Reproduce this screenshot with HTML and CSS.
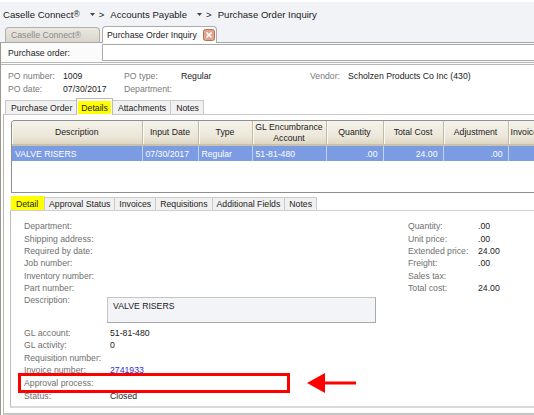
FILE: index.html
```html
<!DOCTYPE html>
<html>
<head>
<meta charset="utf-8">
<link rel="stylesheet" href="styles.css">
</head>
<body>
<div class="app">
  <div class="topbar">
    <div class="crumbs">
      <span class="crumb">Caselle Connect<span class="reg">®</span></span>
      <span class="sep"><svg class="tri" width="5" height="3" viewBox="0 0 5 3"><polygon points="0,0 5,0 2.5,3" fill="#444"/></svg><span>&gt;</span></span>
      <span class="crumb">Accounts Payable</span>
      <span class="sep"><svg class="tri" width="5" height="3" viewBox="0 0 5 3"><polygon points="0,0 5,0 2.5,3" fill="#444"/></svg><span>&gt;</span></span>
      <span class="crumb">Purchase Order Inquiry</span>
    </div>
    <div class="doctabs">
      <div class="doctab inactive">Caselle Connect®</div>
      <div class="doctab active">
        <span>Purchase Order Inquiry</span>
        <svg class="close" width="12" height="12" viewBox="0 0 12 12">
          <rect x="0.5" y="0.5" width="11" height="11" rx="2" fill="#e1a58f" stroke="#b8705a"/>
          <path d="M3.5 3.5 L8.5 8.5 M8.5 3.5 L3.5 8.5" stroke="#fff" stroke-width="1.6"/>
        </svg>
      </div>
    </div>
  </div>

  <div class="main">
    <div class="search-row">
      <span class="search-label">Purchase order:</span>
      <div class="search-input"></div>
    </div>

    <div class="po-info">
      <span class="k">PO number:</span><span class="v">1009</span>
      <span class="k">PO type:</span><span class="v">Regular</span>
      <span class="k">Vendor:</span><span class="v">Scholzen Products Co Inc (430)</span>
      <span class="k">PO date:</span><span class="v">07/30/2017</span>
      <span class="k">Department:</span><span class="v"></span>
    </div>

    <div class="subtabs">
      <div class="stab">Purchase Order</div>
      <div class="stab sel"><span class="hl">Details</span></div>
      <div class="stab">Attachments</div>
      <div class="stab">Notes</div>
    </div>

    <div class="panel">
      <div class="grid">
        <table>
          <colgroup>
            <col class="c-desc"><col class="c-date"><col class="c-type"><col class="c-gl"><col class="c-qty"><col class="c-total"><col class="c-adj"><col class="c-inv">
          </colgroup>
          <thead>
            <tr>
              <th>Description</th>
              <th>Input Date</th>
              <th>Type</th>
              <th class="two">GL Encumbrance<br>Account</th>
              <th>Quantity</th>
              <th>Total Cost</th>
              <th>Adjustment</th>
              <th class="left">Invoice</th>
            </tr>
          </thead>
          <tbody>
            <tr>
              <td>VALVE RISERS</td>
              <td>07/30/2017</td>
              <td>Regular</td>
              <td>51-81-480</td>
              <td class="num">.00</td>
              <td class="num">24.00</td>
              <td class="num">.00</td>
              <td></td>
            </tr>
          </tbody>
        </table>
      </div>

      <div class="detail">
        <div class="dtabs">
          <div class="dtab sel">Detail</div>
          <div class="dtab">Approval Status</div>
          <div class="dtab">Invoices</div>
          <div class="dtab">Requisitions</div>
          <div class="dtab">Additional Fields</div>
          <div class="dtab">Notes</div>
        </div>
        <div class="detail-body">
          <div class="detail-left">
            <div class="row"><span class="k">Department:</span><span class="v"></span></div>
            <div class="row"><span class="k">Shipping address:</span><span class="v"></span></div>
            <div class="row"><span class="k">Required by date:</span><span class="v"></span></div>
            <div class="row"><span class="k">Job number:</span><span class="v"></span></div>
            <div class="row"><span class="k">Inventory number:</span><span class="v"></span></div>
            <div class="row"><span class="k">Part number:</span><span class="v"></span></div>
            <div class="row desc"><span class="k">Description:</span><div class="desc-box">VALVE RISERS</div></div>
            <div class="row lo"><span class="k">GL account:</span><span class="v">51-81-480</span></div>
            <div class="row lo"><span class="k">GL activity:</span><span class="v">0</span></div>
            <div class="row lo"><span class="k">Requisition number:</span><span class="v"></span></div>
            <div class="row lo"><span class="k">Invoice number:</span><a class="link">2741933</a></div>
            <div class="row lo"><span class="k">Approval process:</span><span class="v"></span></div>
            <div class="row lo"><span class="k">Status:</span><span class="v">Closed</span></div>
          </div>
          <div class="detail-right">
            <div class="row"><span class="k">Quantity:</span><span class="v">.00</span></div>
            <div class="row"><span class="k">Unit price:</span><span class="v">.00</span></div>
            <div class="row"><span class="k">Extended price:</span><span class="v">24.00</span></div>
            <div class="row"><span class="k">Freight:</span><span class="v">.00</span></div>
            <div class="row"><span class="k">Sales tax:</span><span class="v"></span></div>
            <div class="row"><span class="k">Total cost:</span><span class="v">24.00</span></div>
          </div>
          <div class="callout-box"></div>
          <svg class="callout-arrow" width="52" height="22" viewBox="0 0 52 22">
            <polygon points="1,11 19,1 19,21" fill="#f00"/>
            <line x1="16" y1="11" x2="50" y2="11" stroke="#f00" stroke-width="3"/>
          </svg>
        </div>
      </div>
    </div>
  </div>
</div>
</body>
</html>
```

FILE: styles.css
```css
* { box-sizing: border-box; }
html, body { margin: 0; padding: 0; }
body {
  width: 534px;
  height: 415px;
  overflow: hidden;
  background: #fff;
  font-family: "Liberation Sans", Arial, sans-serif;
  font-size: 8.7px;
  color: #222;
}
.app { display: flex; flex-direction: column; height: 415px; }

/* top bar */
.topbar {
  height: 42px;
  flex: none;
  background: #f2f3f7;
  border-top: 2px solid #fff;
  display: flex;
  flex-direction: column;
}
.crumbs {
  height: 24px;
  display: flex;
  align-items: center;
  padding-left: 3px;
  font-size: 9.6px;
  color: #1b1b1b;
}
.reg { font-size: 8.5px; position: relative; top: -1px; }
.sep { display: flex; align-items: center; gap: 4px; margin: 0 6px 0 10px; }
.tri { display: block; }
.doctabs {
  flex: 1;
  display: flex;
  align-items: flex-end;
  padding-left: 5px;
}
.doctab {
  height: 15px;
  display: flex;
  align-items: center;
  border: 1px solid #aaa;
  border-bottom: none;
  border-radius: 4px 4px 0 0;
}
.doctab.inactive {
  width: 95px;
  padding-left: 5px;
  background: linear-gradient(#ebe8e1, #dad6cc);
  color: #8a8a8a;
  border-color: #b5b0a6;
}
.doctab.active {
  width: 115px;
  height: 17px;
  margin-left: 2px;
  margin-bottom: -1px;
  padding-left: 4px;
  background: #fff;
  color: #222;
  position: relative;
  z-index: 2;
}
.close { margin-left: auto; margin-right: 1px; display: block; }

/* main */
.main {
  flex: 1;
  display: flex;
  flex-direction: column;
  border-left: 1px solid #9d978e;
  border-top: 1px solid #a6a6a6;
  min-height: 0;
}
.search-row {
  height: 22px;
  flex: none;
  display: flex;
  align-items: center;
  padding-left: 7px;
  background: #fbfbfb;
  border-bottom: 3px double #b8b8b8;
}
.search-label { width: 94px; color: #222; }
.search-input {
  flex: 1;
  height: 17px;
  margin-right: -10px;
  background: #fff;
  border: 1px solid #a9a9a9;
}

.po-info {
  height: 32px;
  flex: none;
  padding: 4px 0 0 7px;
  display: grid;
  grid-template-columns: 55px 61px 57px 129px 38px auto;
  grid-auto-rows: 13px;
  align-items: center;
}
.po-info .k { color: #7a7a7a; }
.po-info .v { color: #222; white-space: nowrap; }

.subtabs {
  height: 17px;
  flex: none;
  display: flex;
  align-items: flex-end;
  padding-left: 4px;
}
.stab {
  height: 14px;
  padding: 0 4px 0 5px;
  display: flex;
  align-items: center;
  background: #f1f1f1;
  border: 1px solid #c9c9c9;
  border-bottom: none;
  margin-right: -1px;
}
.stab.sel {
  height: 17px;
  padding: 0 1px;
  background: #fff;
  margin-bottom: -1px;
  position: relative;
  z-index: 2;
  border-color: #b9b9b9;
}
.hl {
  background: #ffff00;
  height: 13px;
  padding: 0 3px;
  display: flex;
  align-items: center;
  margin-top: 1px;
}

/* panel */
.panel {
  flex: 1;
  min-height: 0;
  margin-left: 2px;
  border-left: 1px solid #b4b4b4;
  border-top: 1px solid #c8c8c8;
  border-bottom: 2px solid #c4c4c4;
  padding: 5px 0 5px 6px;
  display: flex;
  flex-direction: column;
}
.grid {
  flex: none;
  margin-left: 1px;
  width: 560px;
  height: 73px;
  border: 1px solid #8f8f8f;
  border-right: none;
  border-radius: 4px 0 0 0;
  overflow: hidden;
  background: #fff;
}
.grid table {
  border-collapse: collapse;
  table-layout: fixed;
  width: 576px;
}
.c-desc { width: 130px; }
.c-date { width: 56px; }
.c-type { width: 54px; }
.c-gl { width: 74px; }
.c-qty { width: 57px; }
.c-total { width: 60px; }
.c-adj { width: 65px; }
.c-inv { width: 80px; }
.grid th {
  height: 24px;
  padding: 0;
  font-weight: normal;
  color: #222;
  text-align: center;
  line-height: 11px;
  background: linear-gradient(#f5f2ea, #ebe6d8 70%, #ddd6c3);
  border-right: 1px solid #c3baa3;
  border-bottom: 2px solid #c9c1aa;
  box-shadow: inset 1px 0 #fbfaf6;
  white-space: nowrap;
  overflow: hidden;
}
.grid th.left { text-align: left; padding-left: 2px; }
.grid td {
  height: 16px;
  padding: 0 3px;
  background: #7b9be3;
  color: #fff;
  border-right: 1px solid #c4d1f1;
  white-space: nowrap;
  overflow: hidden;
}
.grid td.num { text-align: right; padding-right: 5px; }

/* detail */
.detail {
  flex: 1;
  display: flex;
  flex-direction: column;
  min-height: 0;
}
.dtabs {
  margin-top: 3px;
  height: 14px;
  flex: none;
  display: flex;
  align-items: flex-end;
  padding-left: 1px;
}
.dtab {
  height: 13px;
  padding: 0 4px;
  display: flex;
  align-items: center;
  background: #f1f1f1;
  border: 1px solid #cbcbcb;
  border-bottom: none;
  margin-right: -1px;
}
.dtab.sel {
  height: 14px;
  width: 34px;
  padding: 0 0 0 4px;
  background: #ffff00;
  border-color: #ffff00;
}
.detail-body {
  flex: 1;
  position: relative;
  display: flex;
  padding: 9px 0 0 13px;
  border-top: 1px solid #cfcfcf;
  border-left: 1px solid #bdbdbd;
  border-bottom: 2px solid #dadada;
}
.detail-left { width: 384px; flex: none; }
.detail-right { flex: 1; }
.row {
  height: 12.4px;
  display: flex;
  align-items: center;
}
.row.lo { height: 12.6px; }
.detail-left .k { width: 86px; flex: none; color: #707070; }
.detail-right .k { width: 70px; flex: none; color: #707070; }
.row .v { color: #1a1a1a; }
.row .link { color: #2e2ed6; text-decoration: underline; }
.row.desc {
  height: 32px;
  align-items: flex-start;
}
.row.desc .k { line-height: 12.4px; }
.desc-box {
  margin: 3px 0 0 -3px;
  width: 269px;
  height: 26px;
  padding: 3px 5px;
  background: #f3f4f7;
  border: 1px solid #c4c4c4;
  border-right-color: #a8a8a8;
  border-bottom-color: #a8a8a8;
  color: #222;
}

/* annotation overlays */
.callout-box {
  position: absolute;
  left: 7px;
  top: 162px;
  width: 272px;
  height: 20px;
  border: 3px solid #f00;
}
.callout-arrow {
  position: absolute;
  left: 295px;
  top: 161px;
}
```
